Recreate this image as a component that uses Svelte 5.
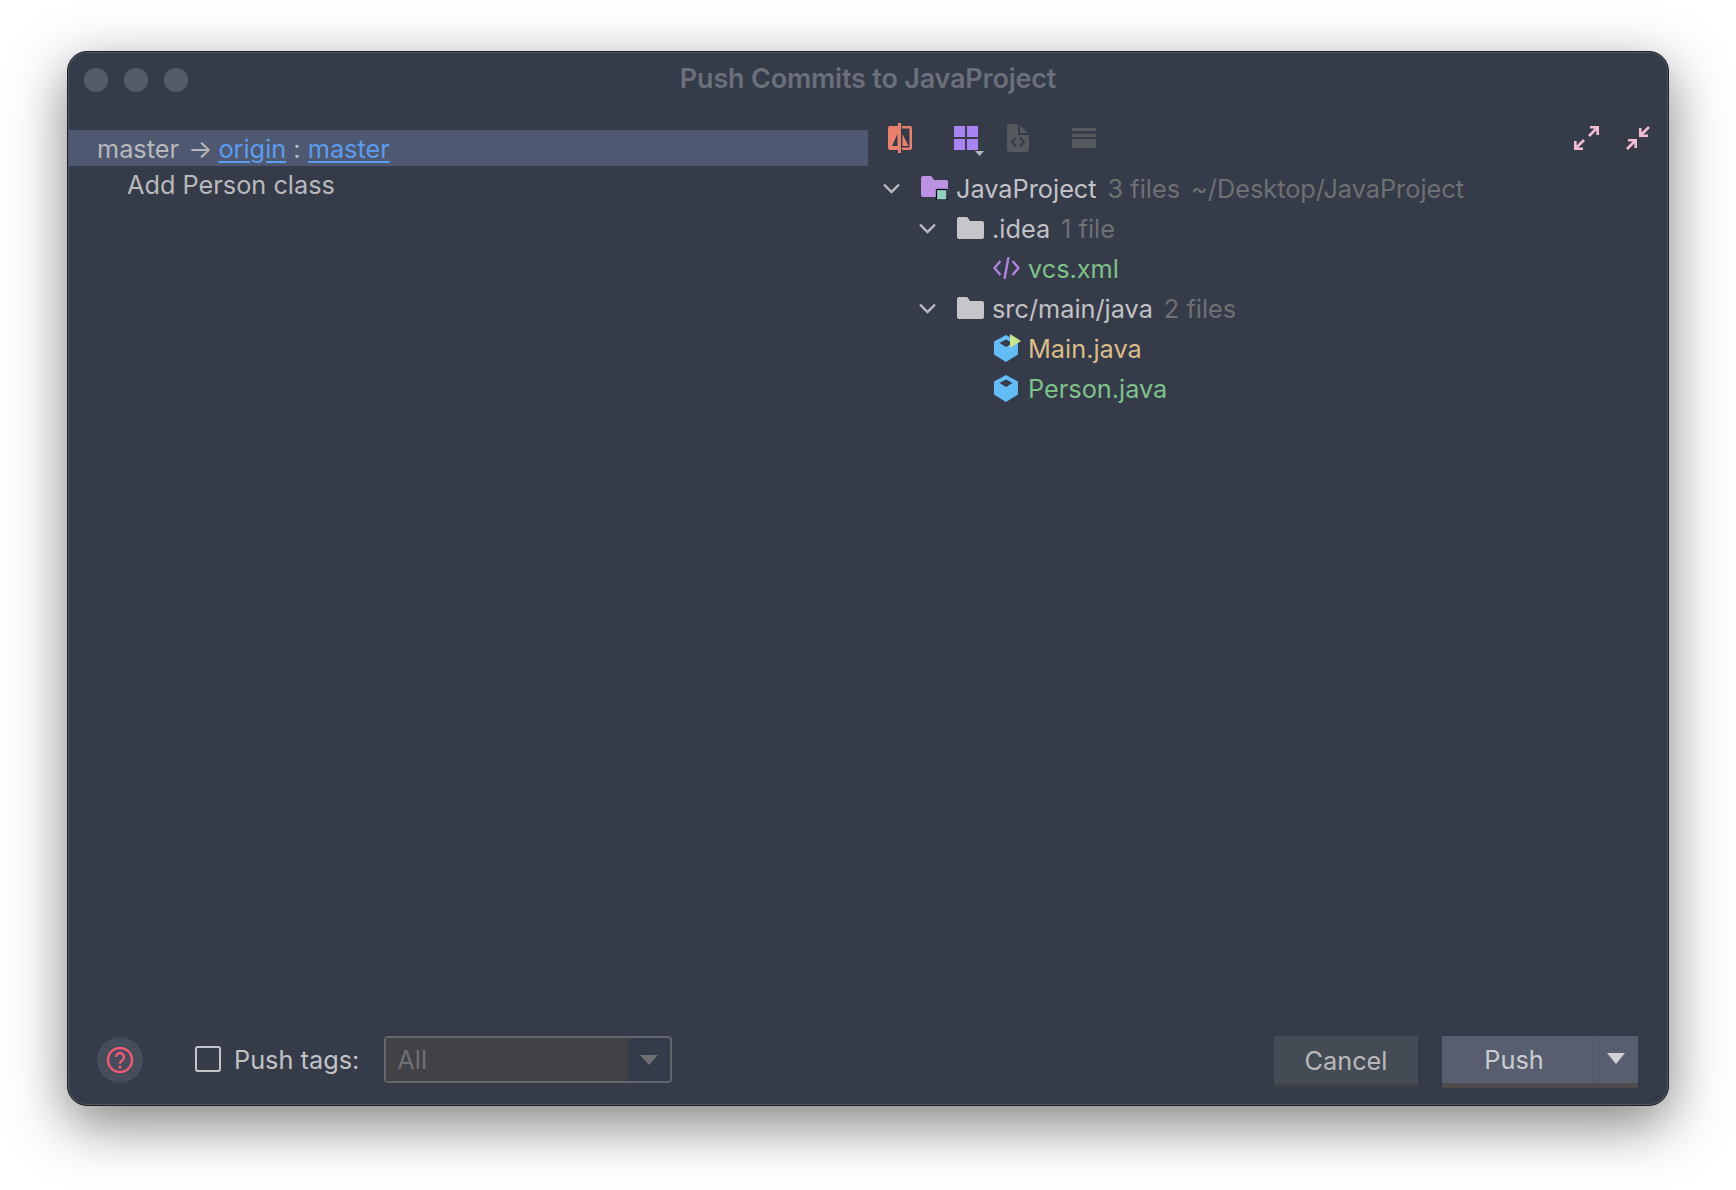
<script>
    const tree = [
        { level: 0, icon: 'project', name: 'JavaProject', meta: '3 files', path: '~/Desktop/JavaProject', arrow: true },
        { level: 1, icon: 'folder', name: '.idea', meta: '1 file', arrow: true },
        { level: 2, icon: 'xml', name: 'vcs.xml', tone: 'added' },
        { level: 1, icon: 'folder', name: 'src/main/java', meta: '2 files', arrow: true },
        { level: 2, icon: 'main', name: 'Main.java', tone: 'changed' },
        { level: 2, icon: 'java', name: 'Person.java', tone: 'added' }
    ];

    let pushTags = false;
</script>

<div class="page">
    <div class="window">
        <div class="titlebar">
            <div class="lights">
                <span></span>
                <span></span>
                <span></span>
            </div>
            <div class="title">Push Commits to JavaProject</div>
        </div>

        <div class="body">
            <div class="commits">
                <div class="branchRow">
                    master <span class="arrow">→</span> <span class="link">origin</span> : <span class="link">master</span>
                </div>
                <div class="commitRow">Add Person class</div>
            </div>

            <div class="files">
                <div class="toolbar">
                    <svg class="diffIcon" width="25" height="30" viewBox="0 0 25 30">
                        <path fill="#e8806e" fill-rule="evenodd" d="M2 3h8v24H2a2 2 0 0 1-2-2V5a2 2 0 0 1 2-2zm7.500 8L4 23h5.500z"/>
                        <rect x="10" y="0" width="3" height="30" fill="#e8806e"/>
                        <path fill="#e8806e" d="M14 3h8a2 2 0 0 1 2 2v20a2 2 0 0 1-2 2h-8v-2.500h7.500v-19H14z"/>
                        <path fill="#e8806e" d="M14.500 11l6 12h-6z"/>
                    </svg>
                    <svg class="gridIcon" width="30" height="30" viewBox="0 0 30 30">
                        <path fill="#a884f3" d="M0 0h11v11H0zM13 0h11v11H13zM0 13h11v11H0zM13 13h11v11H13z"/>
                        <path fill="#b4b8c0" d="M21 25h9l-4.500 5z"/>
                    </svg>
                    <svg class="fileIcon" width="22" height="28" viewBox="0 0 22 28">
                        <path fill="#55585d" d="M3 0h8v11h11v14a3 3 0 0 1-3 3H3a3 3 0 0 1-3-3V3a3 3 0 0 1 3-3z"/>
                        <path fill="#55585d" d="M13 1l8 8h-8z"/>
                        <path fill="none" stroke="#363c4a" stroke-width="2.200" d="M9 13.500l-4 4.500 4 4.500M13 13.500l4 4.500-4 4.500"/>
                    </svg>
                    <svg class="linesIcon" width="24" height="20" viewBox="0 0 24 20">
                        <path fill="#55585d" d="M0 0h24v3H0zM0 6h24v3H0zM0 11h24v9H0z"/>
                    </svg>
                    <svg class="expandIcon" width="25" height="24" viewBox="0 0 25 24">
                        <path fill="none" stroke="#f4bcd2" stroke-width="2.600" d="M16 1.300h7.700V9M23 2l-8 8M9 22.700H1.300V15M2 22l8-8"/>
                    </svg>
                    <svg class="collapseIcon" width="24" height="24" viewBox="0 0 24 24">
                        <path fill="none" stroke="#f4bcd2" stroke-width="2.600" d="M23 1l-8 8M14.300 2v7.700H22M1 23l8-8M9.700 22v-7.700H2"/>
                    </svg>
                </div>

                <div class="tree">
                    {#each tree as row}
                        <div class="treeRow" style="padding-left: {row.level * 36}px">
                            <span class="chevron">
                                {#if row.arrow}
                                    <svg width="17" height="11" viewBox="0 0 17 11">
                                        <path fill="none" stroke="#b9bbc0" stroke-width="2.400" d="M1 1.500l7.500 7.500 7.500-7.500"/>
                                    </svg>
                                {/if}
                            </span>
                            <span class="nodeIcon">
                                {#if row.icon === 'project'}
                                    <svg width="27" height="24" viewBox="0 0 27 24">
                                        <path fill="#bd92e2" d="M2 0h7c1 0 1.500.4 2 1l2 3h12a2 2 0 0 1 2 2v13a2 2 0 0 1-2 2H2a2 2 0 0 1-2-2V2a2 2 0 0 1 2-2z"/>
                                        <rect x="15.500" y="13.500" width="10.500" height="10.500" fill="#93d0c6" stroke="#111" stroke-width="1.300"/>
                                    </svg>
                                {:else if row.icon === 'folder'}
                                    <svg width="27" height="22" viewBox="0 0 27 22">
                                        <path fill="#c6c6ca" d="M2 0h7c1 0 1.500.4 2 1l2 3h12a2 2 0 0 1 2 2v14a2 2 0 0 1-2 2H2a2 2 0 0 1-2-2V2a2 2 0 0 1 2-2z"/>
                                    </svg>
                                {:else if row.icon === 'xml'}
                                    <svg width="27" height="22" viewBox="0 0 27 22">
                                        <path fill="none" stroke="#b083e0" stroke-width="2.400" d="M7.500 4l-6 7 6 7M19.500 4l6 7-6 7M15.500 0l-4 22"/>
                                    </svg>
                                {:else}
                                    <svg class="cube" width="27" height="27" viewBox="0 0 27 27">
                                        <path fill="#63bcf4" fill-rule="evenodd" d="M13 0l12 6.500v13L13 27 1 19.500v-13zM13 4.500 6.500 8l6.500 4 6.500-4z"/>
                                        {#if row.icon === 'main'}
                                            <path fill="#c6e58c" d="M17 -1l11 7-11 7z"/>
                                        {/if}
                                    </svg>
                                {/if}
                            </span>
                            <span class="name {row.tone ?? ''}">{row.name}</span>
                            {#if row.meta}
                                <span class="meta">{row.meta}</span>
                            {/if}
                            {#if row.path}
                                <span class="meta">{row.path}</span>
                            {/if}
                        </div>
                    {/each}
                </div>
            </div>
        </div>

        <div class="footer">
            <button class="help" aria-label="Help">
                <svg width="28" height="28" viewBox="0 0 28 28">
                    <circle cx="14" cy="14" r="12" fill="none" stroke="#f05a75" stroke-width="2.400"/>
                    <path fill="none" stroke="#f05a75" stroke-width="2.400" d="M10 11a4 4 0 1 1 6.300 3.300c-1.500 1-2.300 1.700-2.300 3.400"/>
                    <circle cx="14" cy="21" r="1.500" fill="#f05a75"/>
                </svg>
            </button>

            <label class="tagsLabel">
                <input class="check" type="checkbox" bind:checked={pushTags} />
                Push tags:
            </label>

            <div class="combo">
                <span class="comboValue">All</span>
                <span class="comboArrow"></span>
            </div>

            <div class="actions">
                <button class="button">Cancel</button>
                <div class="pushButton">
                    <button class="pushMain">Push</button>
                    <button class="pushMore" aria-label="More"><span></span></button>
                </div>
            </div>
        </div>
    </div>
</div>

<style>
    :global(body) {
        margin: 0;
        background: #fff;
    }

    .page {
        box-sizing: border-box;
        width: 1736px;
        height: 1190px;
        padding: 51px 0 0 67px;
        overflow: hidden;
        font-family: Inter, "Noto Sans", sans-serif;
        font-size: 25.3px;
        color: #b9b9bc;
    }

    .window {
        box-sizing: border-box;
        width: 1602px;
        height: 1055px;
        display: flex;
        flex-direction: column;
        background: #353b49;
        border: 1px solid #1e1f24;
        border-radius: 20px;
        box-shadow: inset 0 0 0 1px rgba(255, 255, 255, 0.14), 0 18px 56px rgba(0, 0, 0, 0.5);
    }

    .titlebar {
        position: relative;
        height: 66px;
        flex: none;
    }

    .lights {
        display: flex;
        gap: 16px;
        padding: 16px 0 0 16px;
    }

    .lights span {
        width: 24px;
        height: 24px;
        border-radius: 50%;
        background: #565b68;
    }

    .title {
        position: absolute;
        inset: 0;
        padding-top: 10px;
        text-align: center;
        font-size: 27px;
        font-weight: 600;
        letter-spacing: -0.2px;
        color: #6b6f7a;
    }

    .body {
        flex: 1;
        display: flex;
        min-height: 0;
    }

    .commits {
        width: 800px;
        padding-top: 12px;
        flex: none;
    }

    .branchRow {
        height: 36px;
        line-height: 37px;
        padding-left: 29px;
        background: #4e5870;
        white-space: pre-wrap;
    }

    .arrow {
        margin: 0 -1px 0 2px;
    }

    .link {
        color: #5c9cf0;
        text-decoration: underline;
        text-underline-offset: 3px;
    }

    .commitRow {
        height: 36px;
        line-height: 37px;
        padding-left: 59px;
    }

    .files {
        flex: 1;
        min-width: 0;
    }

    .toolbar {
        height: 40px;
        display: flex;
        align-items: center;
    }

    .diffIcon {
        margin-left: 20px;
    }

    .gridIcon {
        margin-left: 41px;
        margin-top: 6px;
    }

    .fileIcon {
        margin-left: 23px;
    }

    .linesIcon {
        margin-left: 43px;
    }

    .expandIcon {
        margin-left: auto;
    }

    .collapseIcon {
        margin-left: 27px;
        margin-right: 18px;
    }

    .tree {
        padding: 10px 0 0 15px;
    }

    .treeRow {
        height: 40px;
        display: flex;
        align-items: center;
        white-space: nowrap;
    }

    .chevron {
        width: 38px;
        flex: none;
        display: flex;
    }

    .nodeIcon {
        width: 35px;
        height: 27px;
        flex: none;
        display: flex;
        align-items: center;
    }

    .cube {
        overflow: visible;
    }

    .name {
        color: #c2c2c6;
    }

    .name.added {
        color: #7ec28a;
    }

    .name.changed {
        color: #dcbd8a;
    }

    .meta {
        margin-left: 11px;
        color: #6e7074;
    }

    .footer {
        margin-top: auto;
        display: flex;
        align-items: flex-start;
        padding: 0 30px 17px 29px;
    }

    button {
        font: inherit;
        color: inherit;
        border: none;
        padding: 0;
    }

    .help {
        width: 46px;
        height: 46px;
        margin-top: 1px;
        border-radius: 50%;
        background: #464c59;
        display: flex;
        align-items: center;
        justify-content: center;
    }

    .tagsLabel {
        display: flex;
        align-items: center;
        gap: 13px;
        height: 46px;
        margin-left: 52px;
        color: #c2c2c6;
    }

    .check {
        appearance: none;
        box-sizing: border-box;
        width: 26px;
        height: 26px;
        margin: 0;
        border: 2.500px solid #c6c6ca;
        border-radius: 3px;
    }

    .combo {
        box-sizing: border-box;
        width: 288px;
        height: 47px;
        margin-left: 25px;
        display: flex;
        border: 2px solid #63666c;
        border-radius: 4px;
    }

    .comboValue {
        flex: 1;
        background: #414245;
        padding-left: 11px;
        line-height: 43px;
        color: #6e7074;
    }

    .comboArrow {
        width: 42px;
        position: relative;
    }

    .comboArrow::after {
        content: '';
        position: absolute;
        left: 12px;
        top: 17px;
        border-left: 9px solid transparent;
        border-right: 9px solid transparent;
        border-top: 10px solid #6e7074;
    }

    .actions {
        margin-left: auto;
        display: flex;
        gap: 24px;
    }

    .button {
        width: 144px;
        height: 51px;
        background: #454b55;
        border-bottom: 3px solid #3f4147;
        color: #b9b9bc;
    }

    .pushButton {
        display: flex;
        height: 52px;
        border-bottom: 5px solid #4d4a4c;
        box-sizing: border-box;
    }

    .pushMain {
        width: 151px;
        padding-right: 7px;
        background: #585e6f;
        color: #cbcbd0;
    }

    .pushMore {
        width: 45px;
        background: #585e6f;
        border-left: 1px solid #535969;
        position: relative;
    }

    .pushMore span {
        position: absolute;
        left: 13px;
        top: 17px;
        border-left: 9px solid transparent;
        border-right: 9px solid transparent;
        border-top: 11px solid #d0d0d6;
    }
</style>
